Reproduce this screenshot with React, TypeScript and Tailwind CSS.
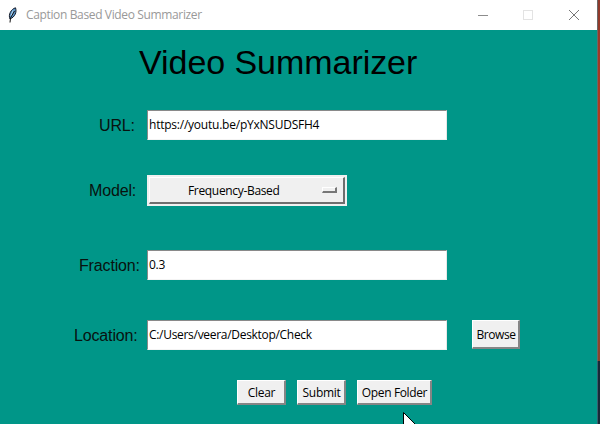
import React from 'react';

const ui = "font-['Open_Sans','Noto_Sans',sans-serif] text-[12px] leading-none whitespace-pre";

function Label({ children, className }: { children: string; className: string }) {
  return (
    <span className={`shrink-0 whitespace-nowrap text-[16px] leading-[32px] tracking-[-0.15px] text-[#08120f] ${className}`}>{children}</span>
  );
}

function Entry({ value, className }: { value: string; className: string }) {
  return (
    <div className="flex h-[30px] w-[300px] shrink-0 items-center border border-r-[#e8e8e8] border-b-[#f4f4f4] border-l-[#8a8a8a] border-t-[#8a8a8a] bg-white pl-px">
      <span className={`${ui} text-black ${className}`}>{value}</span>
    </div>
  );
}

function Button({ children, className, text }: { children: string; className: string; text: string }) {
  return (
    <button
      className={`flex shrink-0 items-center justify-center border-t border-r-2 border-b-2 border-l border-t-white border-r-[#858585] border-b-[#858585] border-l-white bg-[#f0f0f0] pt-[2px] pl-px ${className}`}
    >
      <span className={`${ui} text-black ${text}`}>{children}</span>
    </button>
  );
}

export default function App() {
  return (
    <div className="relative flex h-[424px] w-[600px] overflow-hidden bg-[#009688] font-['Liberation_Sans',Arial,sans-serif]">
      <div className="flex w-[597px] shrink-0 flex-col">
        <header className="flex h-[30px] shrink-0 items-center bg-white pl-2">
          <svg width="9" height="16" viewBox="0 0 9 16" className="shrink-0">
            <path d="M2 12 C0 8 3 2 7.5 .8 C9 5 7 10 2 12Z" fill="#5d97cb" stroke="#111827" strokeWidth="1" />
            <path d="M5 3.5 L3 9" fill="none" stroke="#b7d7f0" strokeWidth="1" />
            <path d="M2 15.5 L2.5 11 L6.5 4" fill="none" stroke="#111" strokeWidth="1" />
          </svg>
          <span className={`${ui} ml-[9px] w-[452px] tracking-[-0.36px] text-[#999999]`}>Caption Based Video Summarizer</span>
          <svg width="104" height="12" viewBox="0 0 104 12" fill="none" className="mb-px shrink-0">
            <path d="M0 6.5h10" stroke="#8c8c8c" />
            <rect x="45.5" y="1.5" width="9" height="9" stroke="#e3e3e3" />
            <path d="M91 1l10 10M101 1l-10 10" stroke="#777" />
          </svg>
        </header>
        <h1 className="h-[80px] shrink-0 pl-[139px] pt-[12px] text-[34px] leading-[40px] tracking-[-0.05px] text-black">Video Summarizer</h1>
        <div className="flex h-[30px] shrink-0">
          <Label className="w-[147px] pl-[99px]">URL:</Label>
          <Entry value="https://youtu.be/pYxNSUDSFH4" className="tracking-[-0.23px]" />
        </div>
        <div className="mt-[35px] flex h-[31px] shrink-0">
          <Label className="w-[147px] pl-[89px]">Model:</Label>
          <div className="h-[31px] w-[200px] bg-[#f0f0f0] p-[2px]">
            <div className="flex h-full items-center border-t border-r-2 border-b-2 border-l border-t-white border-r-[#6e6e6e] border-b-[#6e6e6e] border-l-white pl-[38px]">
              <span className={`${ui} w-[134px] pt-[2px] tracking-[-0.33px] text-black`}>Frequency-Based</span>
              <span className="h-[6px] w-[15px] border-t border-r-2 border-b-2 border-l border-t-white border-r-[#777] border-b-[#777] border-l-white bg-[#f0f0f0]" />
            </div>
          </div>
        </div>
        <div className="mt-[44px] flex h-[30px] shrink-0">
          <Label className="w-[147px] pl-[79px]">Fraction:</Label>
          <Entry value="0.3" className="tracking-[-0.3px]" />
        </div>
        <div className="mt-[40px] flex h-[30px] shrink-0">
          <Label className="w-[147px] pl-[74px]">Location:</Label>
          <Entry value="C:/Users/veera/Desktop/Check" className="tracking-[-0.3px]" />
          <Button className="ml-[25px] h-[29px] w-[48px]" text="tracking-[-0.4px]">Browse</Button>
        </div>
        <div className="mt-[30px] flex h-[26px] shrink-0 pl-[237px]">
          <Button className="h-[25px] w-[49px]" text="tracking-[-0.3px]">Clear</Button>
          <Button className="ml-[11px] h-[25px] w-[49px]" text="tracking-[-0.3px]">Submit</Button>
          <Button className="ml-[11px] h-[25px] w-[75px]" text="tracking-[-0.36px]">Open Folder</Button>
        </div>
      </div>
      <div className="flex w-[3px] flex-col">
        <div className="h-[361px] border-l border-[#696969] bg-linear-to-b from-[#8e392b] via-[#c33b12] to-[#87452e]" />
        <div className="flex-1 border-l border-[#386070] bg-[#182936]" />
      </div>
      <svg width="14" height="12" viewBox="0 0 14 12" className="absolute left-[403px] top-[412px]">
        <path d="M.5 .5V14H14Z" fill="white" stroke="black" />
      </svg>
    </div>
  );
}
